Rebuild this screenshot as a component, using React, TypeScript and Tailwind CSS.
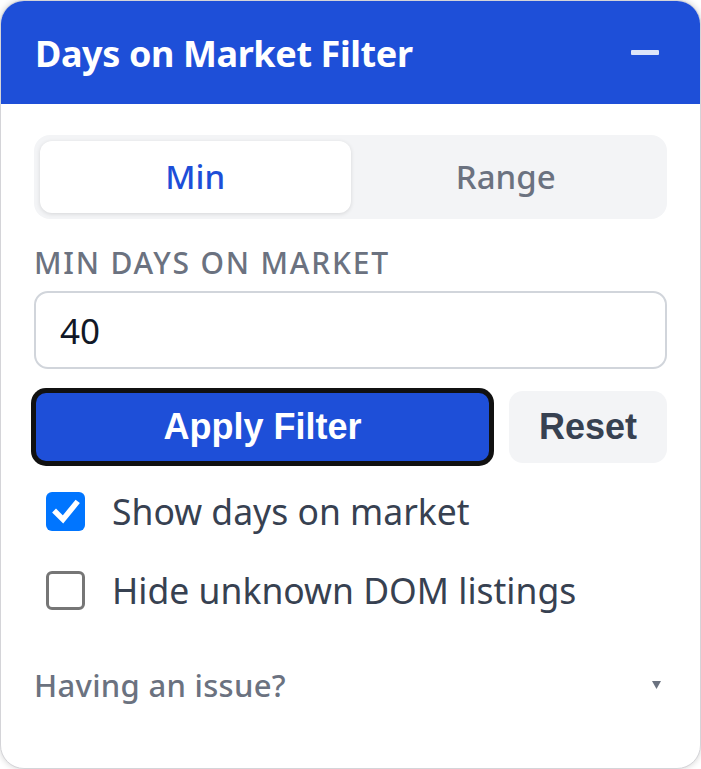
import { useState } from "react";

const FilterPanel = () => {
  const [mode, setMode] = useState<"min" | "range">("min");
  const [minDays, setMinDays] = useState("40");
  const [showDom, setShowDom] = useState(true);
  const [hideUnknown, setHideUnknown] = useState(false);

  return (
    <div className="w-full h-[769px] bg-white rounded-[24px] overflow-hidden border border-[#d4d4d8] shadow-[0_0_6px_rgba(0,0,0,0.18)] font-['Noto_Sans',sans-serif]">
      <div className="h-[103px] bg-[#1e4fd8] flex items-center justify-between pl-[34px] pr-[41px]">
        <h1 className="text-[36px] font-bold text-white tracking-[-0.4px] leading-none mt-[3px]">Days on Market Filter</h1>
        <button className="w-[28px] h-[5px] bg-white/85 rounded-[1px]" aria-label="Collapse" />
      </div>

      <div className="px-[33px] pt-[31px]">
        <div className="h-[84px] rounded-[16px] bg-[#f3f4f6] p-[6px] grid grid-cols-2">
          <button
            onClick={() => setMode("min")}
            className={
              mode === "min"
                ? "rounded-[12px] bg-white shadow-[0_1px_4px_rgba(0,0,0,0.12)] text-[33px] font-medium text-[#1d4ed8]"
                : "rounded-[12px] text-[33px] font-medium text-[#6b7280]"
            }
          >
            Min
          </button>
          <button
            onClick={() => setMode("range")}
            className={
              mode === "range"
                ? "rounded-[12px] bg-white shadow-[0_1px_4px_rgba(0,0,0,0.12)] text-[33px] font-medium text-[#1d4ed8]"
                : "rounded-[12px] text-[33px] font-medium text-[#6b7280]"
            }
          >
            Range
          </button>
        </div>

        <label className="block mt-[24px] mb-[8px] text-[30px] leading-[40px] font-medium uppercase tracking-[1.8px] text-[#6b7280]">
          Min days on market
        </label>
        <input
          value={minDays}
          onChange={(e) => setMinDays(e.target.value)}
          className="w-full h-[78px] border-2 border-[#d1d5db] rounded-[14px] px-[24px] text-[35px] text-[#111827] outline-none"
        />

        <div className="mt-[22px] flex items-center gap-[20px] h-[72px]">
          <button className="flex-1 ml-[2px] h-[68px] rounded-[10px] bg-[#1e4fd8] ring-[5px] ring-[#111] text-white text-[36px] font-bold font-['Liberation_Sans',Arial,sans-serif]">
            Apply Filter
          </button>
          <button className="w-[158px] h-[72px] rounded-[14px] bg-[#f3f4f6] text-[#374151] text-[36px] font-bold font-['Liberation_Sans',Arial,sans-serif]">
            Reset
          </button>
        </div>

        <div className="mt-[9px]">
          <label className="h-[79px] flex items-center gap-[27px] pl-[12px] cursor-pointer">
            <span
              onClick={() => setShowDom(!showDom)}
              className={
                showDom
                  ? "w-[39px] h-[39px] rounded-[6px] bg-[#0075ff] flex items-center justify-center"
                  : "w-[39px] h-[39px] rounded-[6px] border-[3px] border-[#767676] bg-white"
              }
            >
              {showDom && (
                <svg width="28" height="26" viewBox="0 0 28 26" fill="none">
                  <path d="M4 13.5 L11 20.5 L24 4.5" stroke="white" strokeWidth="5.5" strokeLinecap="square" />
                </svg>
              )}
            </span>
            <span className="text-[35.5px] text-[#374151]">Show days on market</span>
          </label>
          <label className="h-[79px] flex items-center gap-[27px] pl-[12px] cursor-pointer">
            <span
              onClick={() => setHideUnknown(!hideUnknown)}
              className={
                hideUnknown
                  ? "w-[39px] h-[39px] rounded-[6px] bg-[#0075ff] flex items-center justify-center"
                  : "w-[39px] h-[39px] rounded-[6px] border-[3px] border-[#767676] bg-white"
              }
            >
              {hideUnknown && (
                <svg width="28" height="26" viewBox="0 0 28 26" fill="none">
                  <path d="M4 13.5 L11 20.5 L24 4.5" stroke="white" strokeWidth="5.5" strokeLinecap="square" />
                </svg>
              )}
            </span>
            <span className="text-[35.5px] text-[#374151]">Hide unknown DOM listings</span>
          </label>
        </div>

        <div className="mt-[27px] h-[56px] flex items-center justify-between pr-[6px]">
          <span className="text-[31px] font-medium text-[#6b7280] tracking-[0.3px]">Having an issue?</span>
          <svg width="9" height="8" viewBox="0 0 9 8">
            <path d="M0 0 H9 L4.5 8 Z" fill="#6b7280" />
          </svg>
        </div>
      </div>
    </div>
  );
};

export default function App() {
  return (
    <div className="w-[701px] h-[769px] bg-white">
      <FilterPanel />
    </div>
  );
}
